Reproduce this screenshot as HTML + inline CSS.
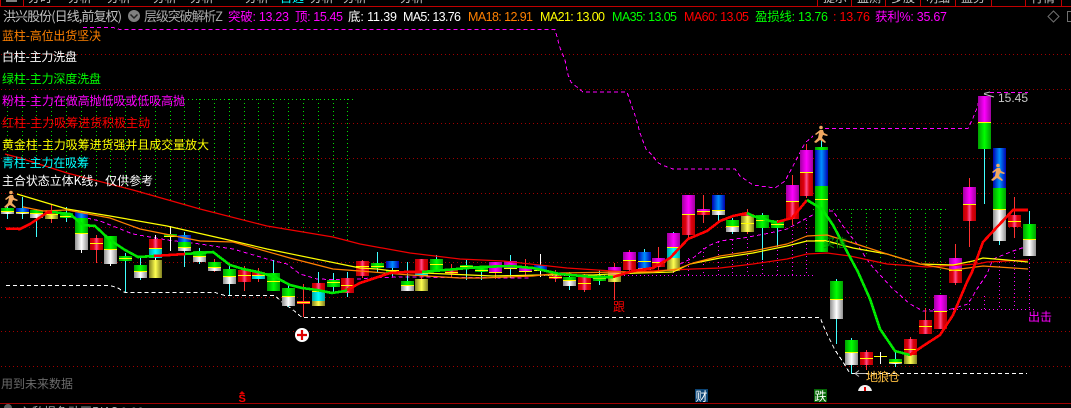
<!DOCTYPE html>
<html><head><meta charset="utf-8"><style>
html,body{margin:0;padding:0;background:#000;width:1071px;height:408px;overflow:hidden}
svg{display:block;position:absolute;left:0;top:0}
text{font-family:"Liberation Sans","WenQuanYi Zen Hei",sans-serif;font-size:12.5px}
.c text,text.c{font-family:"WenQuanYi Zen Hei","Noto Sans CJK SC",sans-serif;font-size:12px}
</style></head><body>
<svg id="s" width="1071" height="408" viewBox="0 0 1071 408" xmlns="http://www.w3.org/2000/svg">
<defs>
<linearGradient id="gr"><stop offset="0" stop-color="#b80000"/><stop offset=".3" stop-color="#e00010"/><stop offset=".5" stop-color="#ff5090"/><stop offset=".7" stop-color="#e00010"/><stop offset="1" stop-color="#b80000"/></linearGradient>
<linearGradient id="gg"><stop offset="0" stop-color="#00a000"/><stop offset=".5" stop-color="#00ff00"/><stop offset="1" stop-color="#00a000"/></linearGradient>
<linearGradient id="gb"><stop offset="0" stop-color="#0000b0"/><stop offset=".5" stop-color="#0090ff"/><stop offset="1" stop-color="#0000b0"/></linearGradient>
<linearGradient id="gw"><stop offset="0" stop-color="#909090"/><stop offset=".5" stop-color="#ffffff"/><stop offset="1" stop-color="#909090"/></linearGradient>
<linearGradient id="gm"><stop offset="0" stop-color="#a000a0"/><stop offset=".5" stop-color="#ff00ff"/><stop offset="1" stop-color="#a000a0"/></linearGradient>
<linearGradient id="gc"><stop offset="0" stop-color="#00a8a8"/><stop offset=".5" stop-color="#00ffff"/><stop offset="1" stop-color="#00a8a8"/></linearGradient>
<linearGradient id="go"><stop offset="0" stop-color="#808020"/><stop offset=".5" stop-color="#ffff50"/><stop offset="1" stop-color="#808020"/></linearGradient>
</defs>
<g id="grid" stroke="#a00000" stroke-width="1" stroke-dasharray="1 3" shape-rendering="crispEdges">
<line x1="1" x2="1071" y1="54.5" y2="54.5"/><line x1="1" x2="1071" y1="89.5" y2="89.5"/><line x1="1" x2="1071" y1="123.5" y2="123.5"/><line x1="1" x2="1071" y1="158.5" y2="158.5"/><line x1="1" x2="1071" y1="193.5" y2="193.5"/><line x1="1" x2="1071" y1="227.5" y2="227.5"/><line x1="1" x2="1071" y1="262.5" y2="262.5"/><line x1="1" x2="1071" y1="297.5" y2="297.5"/><line x1="1" x2="1071" y1="331.5" y2="331.5"/><line x1="1" x2="1071" y1="366.5" y2="366.5"/>
</g>
<g id="hatch" fill="none" stroke-width="1" stroke-dasharray="1 3" shape-rendering="crispEdges">
<line x1="60" x2="356" y1="99.5" y2="99.5" stroke="#00e000"/>
<line x1="813" x2="948" y1="209.5" y2="209.5" stroke="#00e000"/>
<line x1="540" x2="815" y1="275.5" y2="275.5" stroke="#ff00ff"/>
<line x1="925" x2="1035" y1="309.5" y2="309.5" stroke="#ff00ff"/>
</g>
<g class="c" fill="#c8c8c8">
<text x="28" y="2">分时</text><text x="68" y="2">分析</text><text x="107" y="2">分析</text><text x="153" y="2">分析</text><text x="190" y="2">分析</text><text x="245" y="2">分析</text><text x="280" y="2" fill="#00ffff">自选</text><text x="310" y="2">分析</text><text x="343" y="2">分析</text><text x="400" y="2">分析</text><text x="823" y="2">提示</text><text x="857" y="2">监测</text><text x="891" y="2">多股</text><text x="926" y="2">明细</text><text x="961" y="2">盘势</text><text x="1031" y="2">行情</text>
</g>
<rect x="0" y="6" width="1071" height="1" fill="#c00000"/>
<rect x="0" y="403" width="1071" height="1" fill="#a00000"/>
<g fill="none" stroke="#c00000" stroke-width="1" shape-rendering="crispEdges">
<path d="M0.5 0V6M23.5 0V6M817.5 0V6M851.5 0V6M885.5 0V6M920.5 0V6M955.5 0V6M991.5 0V6M1025.5 0V6M1061.5 0V6"/>
</g>
<rect x="6" y="0" width="11" height="2" fill="#808080"/>
<g fill="none" stroke-dasharray="4 3" stroke-width="1" shape-rendering="crispEdges">
<polyline stroke="#ff00ff" points="83,27.5 113,27.5 120,29.5 555,29.5 560,48 565,60 568,75 571,82 578,88 583,92 627,92 631,104 636,118 640,133 646,149 653,156 657,162 662,165 673,169 735,169 740,176 753,185 775,188 785,181 793,166 805,143 813,136"/>
<polyline stroke="#ff00ff" points="825,128.5 968,128.5 973,118 977,108 979,100"/>
<polyline stroke="#ff00ff" points="990,92.5 1028,92.5"/>
<polyline stroke="#ff00ff" points="87,218 100,221 133,234 167,240 200,244 233,249 267,259 287,264 300,274 317,279 347,280 370,278 400,277 530,278"/>
<polyline stroke="#ff00ff" points="680,264 693,258 708,246 720,241 743,238 770,233 787,229 807,218 820,211 833,211 843,226 857,244 870,264 880,275 893,289 910,304 923,311 945,311 968,304 977,289 987,274 993,259 1013,251 1028,246"/>
<polyline stroke="#ffffff" points="6,285.5 110,285.5 118,288 125,292.5 215,292.5 225,295.5 275,295.5 283,303 292,309 302,317.5 820,317.5 826,332 835,350 843,362 850,373.5 1027,373.5"/>
</g>
<g id="cand"></g>
<g fill="none" stroke-linejoin="round">
<polyline stroke="#f00000" stroke-width="1.2" points="5,154 20,158 67,173 133,190 200,209 267,226 333,237 360,244 410,253 460,259 503,261 567,268 627,272 693,269 720,268 753,264 787,259 807,254 827,253 850,256 887,264 927,267 977,264 987,262 1028,260"/>
<polyline stroke="#ffff00" stroke-width="1.2" points="17,194 67,209 110,216 167,226 233,241 267,249 360,268 377,269 400,272 493,276 540,275 593,275 610,274 673,272 690,264 720,258 753,253 787,246 807,241 827,241 853,248 887,254 920,264 953,265 973,261 983,258 1007,260 1028,262"/>
<polyline stroke="#ff8000" stroke-width="1.2" points="23,207 43,211 67,210 110,218 140,229 200,241 233,242 290,258 333,269 360,271 410,275 460,278 483,278 533,276 560,273 620,272 653,272 677,269 693,263 720,256 753,251 787,244 807,236 827,235 853,243 887,254 920,264 953,270 983,266 1028,269"/>
</g>
<g fill="none" stroke-width="2.6" stroke-linejoin="round" shape-rendering="crispEdges">
<polyline stroke="#ff0000" points="6,228.7 20,229 30,224 48,212 52,212"/>
<polyline stroke="#00e800" points="52,212 70,214 83,225 95,226 110,240 125,250 138,257 154,256"/>
<polyline stroke="#ff0000" points="154,256 185,254"/>
<polyline stroke="#00e800" points="185,254 213,252 230,265 243,269 258,272 275,277 290,285 302,288 317,290 332,293 345,291 350,288"/>
<polyline stroke="#ff0000" points="347,290 360,283 372,279 390,273 405,272 422,272"/>
<polyline stroke="#00e800" points="422,272 480,267 510,266 533,268 560,274 593,277 613,277"/>
<polyline stroke="#ff0000" points="613,277 633,271 653,268 670,258 688,239 707,231 720,221 733,216 747,213"/>
<polyline stroke="#00e800" points="747,213 753,216 770,221 777,222 792,218"/>
<polyline stroke="#ff0000" points="777,222 792,218 807,200"/>
<polyline stroke="#00e800" points="807,200 822,209 833,225 843,244 858,272 870,299 880,329 895,351 910,355"/>
<polyline stroke="#ff0000" points="910,355 923,346 940,335 953,315 967,282 972,272 983,242 1013,210 1028,210"/>
</g>
<g id="run" fill="#f0a860">
<g transform="translate(4,190)"><circle cx="7" cy="2.5" r="1.8"/><path d="M6 5L9 5 10 8 14 10 13 11 9 10 8 13 12 17 11 18 6 15 2 18 0 17 4 13 5 8 2 10 1 9Z"/></g>
<g transform="translate(814,125)"><circle cx="7" cy="2.5" r="1.8"/><path d="M6 5L9 5 10 8 14 10 13 11 9 10 8 13 12 17 11 18 6 15 2 18 0 17 4 13 5 8 2 10 1 9Z"/></g>
<g transform="translate(991,163)"><circle cx="7" cy="2.5" r="1.8"/><path d="M6 5L9 5 10 8 14 10 13 11 9 10 8 13 12 17 11 18 6 15 2 18 0 17 4 13 5 8 2 10 1 9Z"/></g>
</g>
<g>
<text class="c" x="3" y="21" fill="#c0c0c0" textLength="119" lengthAdjust="spacing" style="font-size:13px">洪兴股份(日线,前复权)</text>
<circle cx="134" cy="16" r="6" fill="#808080"/><path d="M130.5 14.5L134 18 137.5 14.5" fill="none" stroke="#222" stroke-width="1.5"/>
<text class="c" x="144" y="21" fill="#a8a8a8" textLength="79" lengthAdjust="spacing" style="font-size:13px">层级突破解析Z</text>
<text x="228" y="21" fill="#ff00ff" textLength="61" lengthAdjust="spacing">突破: 13.23</text>
<text x="295" y="21" fill="#ff00ff" textLength="48" lengthAdjust="spacing">顶: 15.45</text>
<text x="348" y="21" fill="#ffffff" textLength="49" lengthAdjust="spacing">底: 11.39</text>
<text x="403" y="21" fill="#ffffff" textLength="58" lengthAdjust="spacing">MA5: 13.76</text>
<text x="468" y="21" fill="#ff8000" textLength="65" lengthAdjust="spacing">MA18: 12.91</text>
<text x="540" y="21" fill="#ffff00" textLength="65" lengthAdjust="spacing">MA21: 13.00</text>
<text x="612" y="21" fill="#00ff00" textLength="65" lengthAdjust="spacing">MA35: 13.05</text>
<text x="684" y="21" fill="#ff0000" textLength="65" lengthAdjust="spacing">MA60: 13.05</text>
<text x="755" y="21" fill="#00ff00" textLength="73" lengthAdjust="spacing">盈损线: 13.76</text>
<text x="833" y="21" fill="#ff0000" textLength="37" lengthAdjust="spacing">: 13.76</text>
<text x="875" y="21" fill="#ff00ff" textLength="72" lengthAdjust="spacing">获利%: 35.67</text>
<path d="M1053.5 11L1059 16.5 1053.5 22 1048 16.5Z" fill="none" stroke="#707070"/>
<path d="M1071 11.5H1067.5V21.5H1071" fill="none" stroke="#707070"/>
</g>
<g class="c">
<text x="2" y="40" fill="#ff8000" textLength="99" lengthAdjust="spacing">蓝柱-高位出货坚决</text>
<text x="2" y="61" fill="#ffffff" textLength="75" lengthAdjust="spacing">白柱-主力洗盘</text>
<text x="2" y="83" fill="#00ff00" textLength="99" lengthAdjust="spacing">绿柱-主力深度洗盘</text>
<text x="2" y="105" fill="#ff00ff" textLength="183" lengthAdjust="spacing">粉柱-主力在做高抛低吸或低吸高抛</text>
<text x="2" y="127" fill="#ff0000" textLength="148" lengthAdjust="spacing">红柱-主力吸筹进货积极主动</text>
<text x="2" y="149" fill="#ffff00" textLength="207" lengthAdjust="spacing">黄金柱-主力吸筹进货强并且成交量放大</text>
<text x="2" y="167" fill="#00ffff" textLength="87" lengthAdjust="spacing">青柱-主力在吸筹</text>
<text x="2" y="185" fill="#ffffff" textLength="151" lengthAdjust="spacing">主合状态立体K线，仅供参考</text>
<text x="1" y="388" fill="#6a6a6a" textLength="72" lengthAdjust="spacing">用到未来数据</text>
<text x="613" y="311" fill="#ff0000">跟</text>
<text x="1028" y="321" fill="#ff00ff">出击</text>
<text x="823" y="247" fill="#00a000">买信</text>
<text x="866" y="381" fill="#ffc040" textLength="34" lengthAdjust="spacing">地狼仓</text>
</g>
<path d="M855 373.5H866M855 373.5L859 370.5M855 373.5L859 376.5" stroke="#c0c0c0" fill="none"/>
<path d="M984 93.5L990 92M984 94L994 97" stroke="#c0c0c0" fill="none"/>
<text x="998" y="102" fill="#c8c8c8" textLength="30" lengthAdjust="spacing" style="font-size:12px">15.45</text>
<circle cx="302" cy="335" r="7" fill="#fff"/><path d="M297 335H307M302 330V340" stroke="#e00000" stroke-width="2.2"/>
<clipPath id="cl"><rect x="855" y="380" width="20" height="11"/></clipPath>
<g clip-path="url(#cl)"><circle cx="865" cy="392" r="7" fill="#f0f0f0"/><rect x="864" y="387" width="2" height="5" fill="#e00000"/></g>
<path d="M242 391L239 394H245Z" fill="#e00000"/>
<text x="238.5" y="402" fill="#ff0000" style="font-size:11px;font-weight:bold">S</text>
<rect x="695" y="389" width="13" height="13" fill="#0c4474"/><text class="c" x="695.5" y="400.5" fill="#fff">财</text>
<rect x="814" y="389" width="13" height="13" fill="#056605"/><text class="c" x="814.5" y="400.5" fill="#fff">跌</text>
<circle cx="8" cy="408" r="4" fill="#606060"/>
<text class="c" x="20" y="416" fill="#b0b0b0">入私提色动画BIAS 0.00</text>
</svg>
<script>
(function(){
var N='http://www.w3.org/2000/svg',g=document.getElementById('cand'),h=document.getElementById('hatch');
function X(i){return 6.7+14.81*i}
function el(p,a){var e=document.createElementNS(N,'rect');for(var k in a)e.setAttribute(k,a[k]);p.appendChild(e);return e}
function ln(p,x1,y1,x2,y2,c,d){var e=document.createElementNS(N,'line');e.setAttribute('x1',x1);e.setAttribute('y1',y1);e.setAttribute('x2',x2);e.setAttribute('y2',y2);e.setAttribute('stroke',c);if(d)e.setAttribute('stroke-dasharray',d);e.setAttribute('shape-rendering','crispEdges');p.appendChild(e)}
var redY=[[0,154],[67,173],[133,190],[200,209],[267,226],[333,237],[360,244]];
function ry(x){for(var i=0;i<redY.length-1;i++){if(x<=redY[i+1][0])return redY[i][1]+(redY[i+1][1]-redY[i][1])*(x-redY[i][0])/(redY[i+1][0]-redY[i][0])}return 244}
var i,x;
for(i=0;i<=23;i++){x=Math.round(X(i))+.5;ln(h,x,99,x,ry(x),'#00e000','1 3')}
for(i=57;i<=63;i++){x=Math.round(X(i))+.5;var b=[244,255,270,285,297,307,311][i-57];ln(h,x,209,x,b,'#00e000','1 3')}
var mt=[[45,264],[46,258],[47,248],[48,242],[49,240],[50,239],[51,237],[52,234],[53,230],[54,220]];
mt.forEach(function(m){x=Math.round(X(m[0]))+.5;ln(h,x,m[1],x,275,'#ff00ff','1 3')});
[[66,296],[65,300],[67,262],[68,253],[69,247]].forEach(function(m){x=Math.round(X(m[0]))+.5;ln(h,x,m[1],x,309,'#ff00ff','1 3')});
[[24,272],[26,272],[30,272],[32,272],[33,272],[35,272],[37,272]].forEach(function(m){x=Math.round(X(m[0]))+.5;ln(h,x,m[1],x,278,'#ff00ff','1 3')});
var R='#ff3030',C='#40ffff',W='#ffffff';
var D=[
[0,205,219,C,'g208-211 w211-214',[211]],
[1,197,219,C,'b208-212 w212-214',[212]],
[2,209,237,C,'g210-213 w213-218',[213]],
[3,204,223,R,'r211-214 o214-219',[214]],
[4,207,222,C,'g213-218',[215.5]],
[5,212,253,W,'b212-218 g218-233 w233-250',[233]],
[6,235,263,R,'r238-250',[243]],
[7,236,266,W,'g236-249 w249-264',[249]],
[8,253,292,C,'g256-261',[258]],
[9,257,280,C,'g265-271 w271-278',[271]],
[10,235,262,W,'r239-248 c248-258 o260-278',[248]],
[11,226,251,W,'g234-237',[235.5]],
[12,232,267,C,'b235-242 g242-247 w247-251',[247]],
[13,248,264,C,'g251-256 w256-262',[256]],
[14,259,272,R,'g262-267 w267-271',[267]],
[15,266,295,C,'g269-276 w276-284',[276]],
[16,266,291,R,'r270-282',[275]],
[17,268,282,R,'r272-275 c275-279',[275]],
[18,260,291,C,'g273-291',[281]],
[19,283,307,C,'g288-296 w296-306',[296]],
[20,284,317,R,'',[302]],
[21,272,306,C,'r283-291 c291-301 o301-306',[291]],
[22,273,292,C,'g280-287',[282]],
[23,272,297,C,'r278-293',[285]],
[24,260,278,R,'r261-276',[266]],
[25,252,272,C,'g263-268',[266]],
[26,261,276,C,'b261-268 g270-274',[270]],
[27,262,291,C,'g281-285 w285-291',[285]],
[28,259,291,R,'r259-271 c272-275 o279-291',[275]],
[29,255,271,C,'g259-271',[264]],
[30,264,278,R,'r270-274',[272]],
[31,260,280,C,'g265-268',[266]],
[32,268,280,C,'g268-272',[270]],
[33,270,279,R,'m262-272',[272]],
[34,255,278,C,'m261-268',[268]],
[35,259,275,R,'m268-272',[271]],
[36,254,277,W,'b265-270',[270]],
[37,270,282,R,'r276-279',[277]],
[38,272,290,C,'g277-280 w280-286',[280]],
[39,274,292,R,'r277-290',[283]],
[40,270,285,C,'g276-281',[278]],
[41,263,300,R,'m267-275 o275-282',[275]],
[42,250,272,R,'m252-260 r260-270',[260]],
[43,249,272,C,'b252-261 b261-268 w268-270',[261]],
[44,247,270,R,'m258-262 r262-267',[262]],
[45,232,272,C,'m233-247 c247-258 o258-271',[247]],
[46,195,240,R,'m195-214 r214-235',[214]],
[47,195,223,R,'m209-211 r211-215',[211]],
[48,195,221,C,'b195-210 w210-215',[210]],
[49,218,234,C,'g220-226 w226-232',[226]],
[50,209,234,R,'r214-216 o216-232',[223]],
[51,213,260,C,'g215-228',[220]],
[52,220,246,C,'g221-228',[224]],
[53,175,225,R,'m185-201 r201-219',[201]],
[54,144,198,R,'m150-172 r172-196',[172]],
[55,140,252,C,'g147-150 b150-186 g186-252',[199,240]],
[56,279,344,C,'g281-299 w299-319',[299]],
[57,338,374,C,'g340-352 w352-365',[352]],
[58,350,370,R,'r352-365',[358]],
[60,352,367,C,'g359-362 w362-364',[362]],
[61,337,364,R,'r339-355 o355-364',[349]],
[62,308,334,R,'r320-334',[326]],
[63,295,329,R,'m295-311 r311-329',[311]],
[64,244,285,R,'m258-270 r270-283',[270]],
[65,178,247,R,'m187-204 r204-221',[204]],
[66,96,204,C,'m96-122 g123-149',[122]],
[67,148,245,C,'b148-188 g188-209 w209-241',[209]],
[68,197,238,R,'r215-227',[221]],
[69,211,256,C,'g224-239 w239-256',[239]]
];
var M={r:'gr',g:'gg',b:'gb',w:'gw',m:'gm',c:'gc',o:'go'};
D.forEach(function(d){
 var cx=Math.round(X(d[0])),l=cx-6;
 ln(g,cx+.5,d[1],cx+.5,d[2],d[3]);
 if(d[4])d[4].split(' ').forEach(function(s){
  var t=s[0],p=s.slice(1).split('-');
  el(g,{x:l,y:p[0],width:13,height:p[1]-p[0],fill:'url(#'+M[t]+')','shape-rendering':'crispEdges'});
 });
 d[5].forEach(function(y){el(g,{x:l,y:Math.round(y),width:13,height:1,fill:'#ffff00','shape-rendering':'crispEdges'})});
});
var c59=Math.round(X(59));
el(g,{x:c59-6,y:356,width:13,height:1,fill:'#ffff00'});
el(g,{x:c59,y:352,width:1,height:12,fill:'#ffffff'});
el(g,{x:Math.round(X(20))-6,y:301,width:13,height:1,fill:'#ff3030'});
el(g,{x:Math.round(X(20))-6,y:303,width:13,height:1,fill:'#ff3030'});
})();
</script>
</body></html>
